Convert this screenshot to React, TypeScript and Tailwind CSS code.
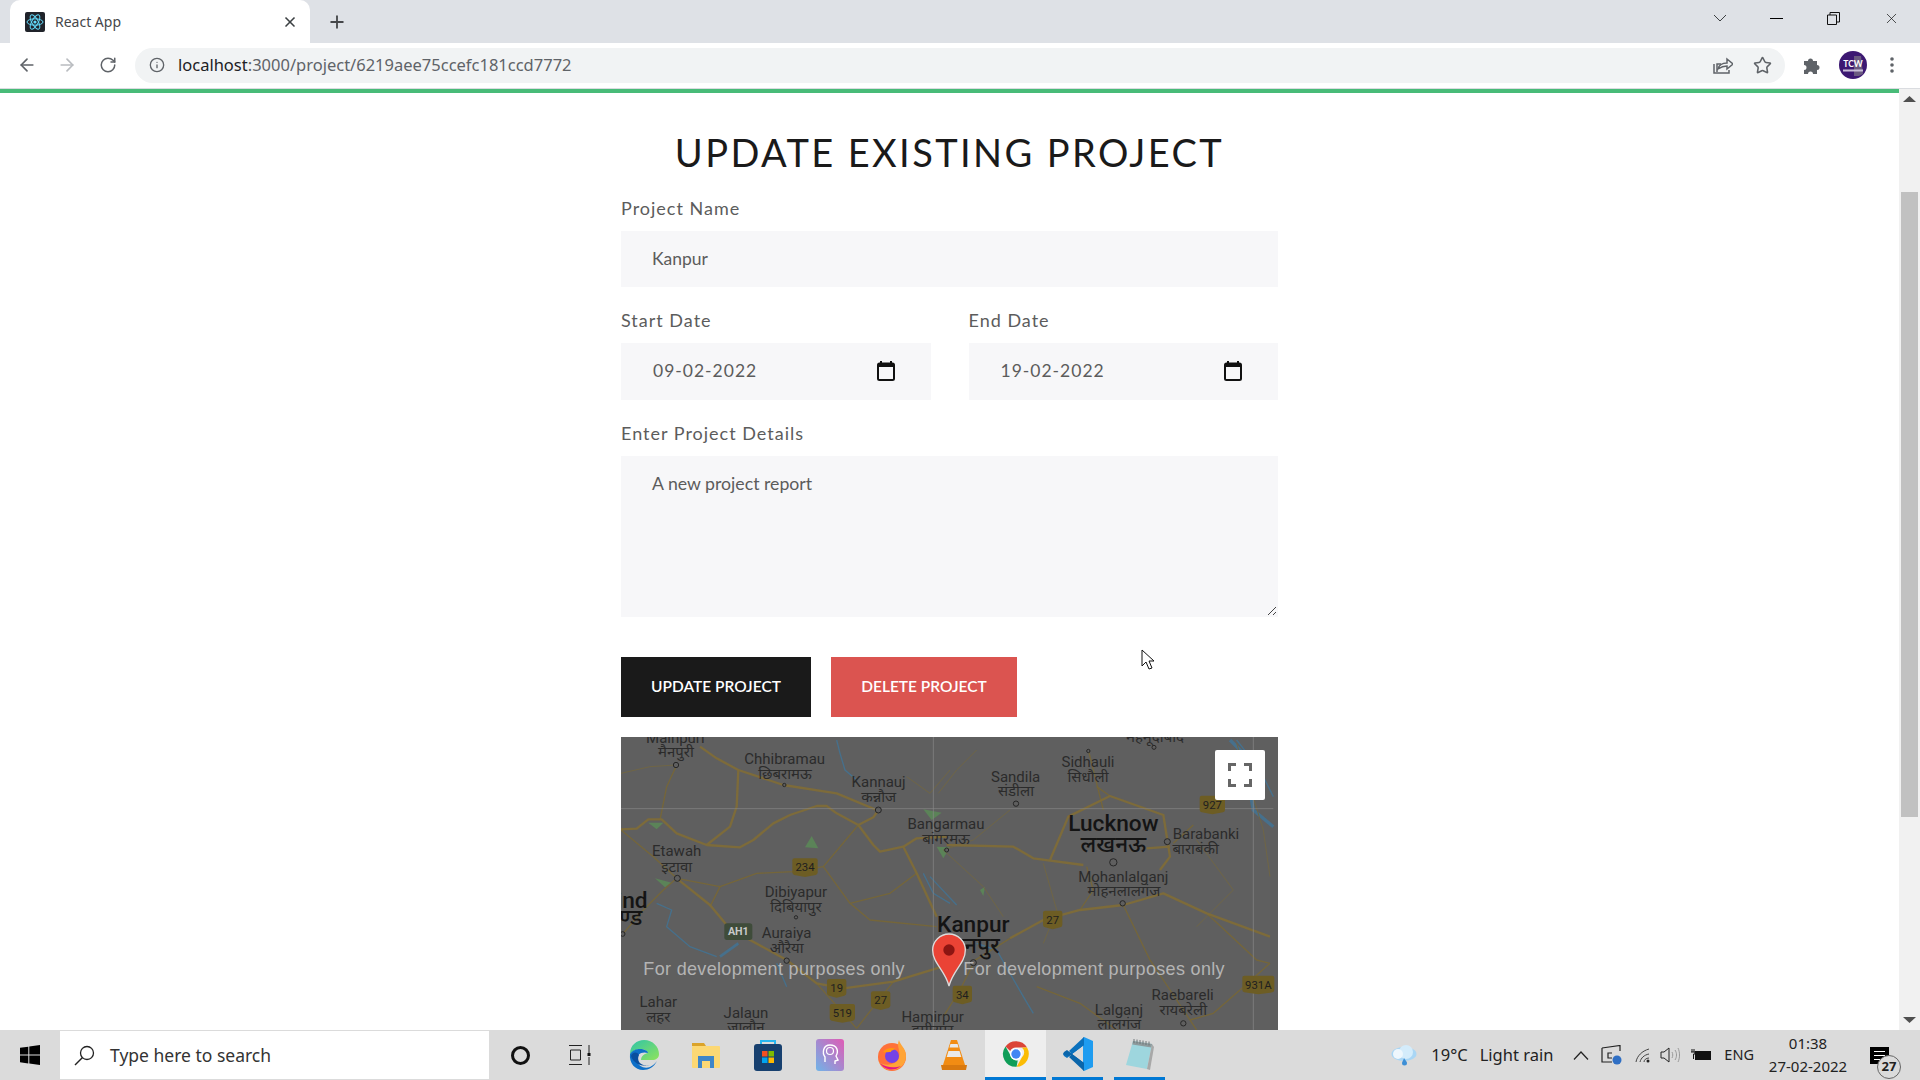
import { ArrowLeft, ArrowRight, Info, Plus, RotateCw, Star, X } from "lucide-react";

const highways = [
  "M33 298 L80 296 L115 268 L155 268 L200 310 L290 345 L390 352 L430 330 L490 280 L540 255 L620 228 L650 228 L680 250 L745 285 L790 345 L810 365 L880 350 L920 325 L1010 320",
  "M745 285 L790 262 L805 240",
  "M270 50 L320 85 L385 120 L520 165 L680 190 L800 240",
  "M385 120 L380 230 L360 290 L290 345",
  "M200 445 L300 525 L350 585 L420 630 L530 690 L620 760 L700 775 L850 755 L980 715 L1020 700",
  "M880 350 L920 430 L980 560",
  "M1010 345 L1210 350 L1270 385 L1420 405",
  "M1200 625 L1300 570 L1410 540 L1540 525 L1660 490 L1790 550 L1980 620",
  "M1320 390 L1375 260 L1500 198 L1660 255 L1680 380 L1650 420",
  "M1680 350 L1610 355",
];

const roads = [
  "M200 105 L170 170 L150 270",
  "M33 300 L130 380 L200 445",
  "M200 445 L330 470 L440 430 L550 425 L640 410 L745 285",
  "M330 470 L300 530",
  "M40 610 L100 540 L160 480 L200 445",
  "M620 760 L740 895",
  "M850 755 L740 895",
  "M640 410 L720 520 L780 570 L980 590",
  "M720 520 L840 490 L920 430",
  "M1435 60 L1480 240",
  "M1460 170 L1500 198",
  "M1410 540 L1450 480 L1430 410",
  "M1080 700 L1200 625",
  "M1090 700 L1050 780 L1000 860",
  "M1540 525 L1620 690 L1680 780 L1760 900",
  "M1790 550 L1940 690 L1980 700",
  "M1750 285 L1690 340",
  "M1980 700 L1890 780 L1810 850 L1740 870",
  "M1280 770 L1410 820 L1520 900",
];

const thinRoads = [
  "M33 130 L120 110 L198 105",
  "M890 140 L960 190 L1020 120",
  "M985 190 L1040 120 L1100 60",
  "M1200 240 L1090 330 L1000 360",
  "M1000 360 L1120 470 L1180 560",
  "M1300 400 L1340 540 L1300 640",
  "M1760 330 L1870 480 L1760 590",
  "M1880 40 L1960 300 L1980 440",
];

const rivers = [
  "M140 520 L185 540 L170 590 L240 650 L320 680",
  "M500 700 L530 770",
  "M680 30 L690 70 L705 120 L740 150",
  "M940 430 L970 490 L1020 520",
  "M1100 640 L1160 660 L1240 800 L1270 850",
  "M960 440 L1040 525",
  "M1880 30 L1950 120 L1990 200",
];

const parks = [
  "585,352 605,318 625,355",
  "135,445 185,458 165,472",
  "115,278 160,278 140,298",
  "940,238 995,248 965,270",
  "980,350 1020,352 1000,385",
  "1110,480 1125,470 1120,498",
];

const smallLabels: [string, number, number][] = [
  ["Mainpuri", 196, 38],
  ["मैनपुरी", 198, 82],
  ["Chhibramau", 524, 102],
  ["छिबरामऊ", 525, 148],
  ["Kannauj", 806, 172],
  ["कन्नौज", 806, 215],
  ["Etawah", 200, 378],
  ["इटावा", 200, 425],
  ["Dibiyapur", 558, 500],
  ["दिबियापुर", 558, 545],
  ["Auraiya", 530, 625],
  ["औरैया", 530, 668],
  ["Lahar", 145, 830],
  ["लहर", 145, 875],
  ["Jalaun", 408, 865],
  ["जालौन", 408, 905],
  ["Hamirpur", 968, 877],
  ["हमीरपुर", 968, 915],
  ["Bangarmau", 1008, 298],
  ["बांगरमऊ", 1008, 342],
  ["Sidhauli", 1434, 112],
  ["सिधौली", 1434, 156],
  ["Sandila", 1217, 155],
  ["संडीला", 1218, 198],
  ["महमूदाबाद", 1635, 35],
  ["Barabanki", 1788, 328],
  ["बाराबंकी", 1757, 372],
  ["Mohanlalganj", 1540, 455],
  ["मोहनलालगंज", 1542, 498],
  ["Raebareli", 1718, 810],
  ["रायबरेली", 1720, 855],
  ["Lalganj", 1527, 855],
  ["लालगंज", 1528, 898],
];

const bigLabels: [string, number, number][] = [
  ["Lucknow", 1510, 302],
  ["लखनऊ", 1510, 367],
  ["Kanpur", 1090, 605],
  ["कानपुर", 1080, 670],
  ["ind", 66, 533],
  ["ण्ड", 62, 585],
];

const shields: [string, number, number, number][] = [
  ["234", 585, 413, 76],
  ["19", 680, 775, 58],
  ["27", 812, 812, 58],
  ["519", 697, 850, 76],
  ["927", 1807, 225, 76],
  ["27", 1328, 570, 58],
  ["34", 1057, 795, 58],
  ["931A", 1945, 765, 96],
];

const towns: [number, number, number][] = [
  [198, 105, 8],
  [523, 165, 5],
  [805, 240, 9],
  [202, 445, 9],
  [558, 562, 5],
  [530, 692, 8],
  [38, 612, 7],
  [1218, 221, 8],
  [1435, 63, 5],
  [1632, 52, 6],
  [1672, 335, 9],
  [1510, 397, 11],
  [1538, 520, 8],
  [1010, 360, 6],
  [1090, 698, 9],
  [1720, 880, 8],
];

const MapDrawing = () => (
  <svg viewBox="0 0 657 293" className="block h-full w-full font-['Roboto','Noto_Sans',sans-serif]">
    <rect width="657" height="293" fill="#5f5f5f" />
    <g transform="translate(-11 -7) scale(0.33333)">
      {parks.map((p) => (
        <polygon key={p} points={p} fill="#5b8358" />
      ))}
      {rivers.map((d) => (
        <path key={d} d={d} fill="none" stroke="#46708c" strokeWidth="4" />
      ))}
      <path d="M330 680 L385 640" fill="none" stroke="#46708c" strokeWidth="8" />
      <path d="M1860 30 L1900 70 L1930 240 L1990 290" fill="none" stroke="#46708c" strokeWidth="10" />
      {thinRoads.map((d) => (
        <path key={d} d={d} fill="none" stroke="#6f6545" strokeWidth="3" />
      ))}
      {roads.map((d) => (
        <path key={d} d={d} fill="none" stroke="#75663a" strokeWidth="4" strokeLinejoin="round" />
      ))}
      {highways.map((d) => (
        <path key={d} d={d} fill="none" stroke="#7d6b3a" strokeWidth="7" strokeLinejoin="round" />
      ))}
      <path d="M33 236 H1990 M970 21 V900 M1930 21 V900" fill="none" stroke="#8a8a8a" strokeWidth="2" />
      {towns.map(([x, y, r]) => (
        <circle key={`${x}-${y}`} cx={x} cy={y} r={r} fill="#5f5f5f" stroke="#262626" strokeWidth="3" />
      ))}
      {smallLabels.map(([t, x, y]) => (
        <text key={t} x={x} y={y} textAnchor="middle" fontSize="45" fill="#2b2b2b">
          {t}
        </text>
      ))}
      {bigLabels.map(([t, x, y]) => (
        <text key={t} x={x} y={y} textAnchor="middle" fontSize="68" fontWeight="500" fill="#141414">
          {t}
        </text>
      ))}
      {shields.map(([t, x, y, w]) => (
        <g key={`${t}-${x}`}>
          <path
            d={`M${x - w / 2} ${y - 22} q0 -6 6 -6 H${x + w / 2 - 6} q6 0 6 6 V${y + 14} q0 6 -6 8 L${x} ${y + 28} L${x - w / 2 + 6} ${y + 22} q-6 -2 -6 -8 Z`}
            fill="#6d5d24"
          />
          <text x={x} y={y + 11} textAnchor="middle" fontSize="34" fill="#1f1f1f">
            {t}
          </text>
        </g>
      ))}
      <rect x="343" y="580" width="84" height="50" rx="8" fill="#3f4c3a" />
      <text x="385" y="616" textAnchor="middle" fontSize="32" fontWeight="700" fill="#c9c9c9">
        AH1
      </text>
      <text x="100" y="735" fontSize="54" letterSpacing="1" fill="#b4b4b4" className="font-['Liberation_Sans',sans-serif]">
        For development purposes only
      </text>
      <text x="1060" y="735" fontSize="54" letterSpacing="1" fill="#b4b4b4" className="font-['Liberation_Sans',sans-serif]">
        For development purposes only
      </text>
      <path
        d="M1017 612 C990 612 968 634 968 660 C968 700 1005 720 1017 768 C1029 720 1066 700 1066 660 C1066 634 1044 612 1017 612 Z"
        fill="#ea4335"
        stroke="#dcdcdc"
        strokeWidth="4"
      />
      <circle cx="1017" cy="660" r="17" fill="#8c1512" />
    </g>
  </svg>
);

const CalendarIcon = () => (
  <svg width="18" height="20" viewBox="0 0 18 20" className="-mt-[2px] shrink-0">
    <path d="M4 0v3M14 0v3" stroke="#111" strokeWidth="2" />
    <rect x="1" y="2.5" width="16" height="16.5" rx="1.5" fill="none" stroke="#111" strokeWidth="2" />
    <rect x="1" y="2.5" width="16" height="3.5" fill="#111" />
  </svg>
);

const TaskIcons = {
  edge: (
    <svg width="32" height="32" viewBox="0 0 32 32">
      <defs>
        <linearGradient id="edgeA" x1="0" y1="0" x2="1" y2="1">
          <stop offset="0" stopColor="#2ec4a8" />
          <stop offset="1" stopColor="#8fe35c" />
        </linearGradient>
      </defs>
      <path d="M2 15C2 6 9 1 16 1c9 0 15 7 15 14 0 4-3 6-7 6H13c0-6 7-7 7-7C18 9 8 8 2 15Z" fill="url(#edgeA)" />
      <path d="M2 15c5-8 18-5 18-1-6-2-12 1-11 8 1 5 7 8 13 6 2-1 5-3 7-6-3 6-8 9-14 9C7 31 1 24 2 15Z" fill="#0e70c8" />
      <path d="M11 16c-3 6 2 12 11 10-6 2-16 0-19-9 1-4 6-5 8-1Z" fill="#0a4f9e" />
    </svg>
  ),
  files: (
    <svg width="28" height="26" viewBox="0 0 28 26">
      <path d="M0 1h12l2 3H0Z" fill="#dba32a" />
      <rect y="4" width="28" height="22" rx="1" fill="#fcd874" />
      <path d="M6 14h16v12h-4v-7h-8v7H6Z" fill="#3f86c8" />
    </svg>
  ),
  store: (
    <svg width="28" height="32" viewBox="0 0 28 32">
      <path d="M7 8V2h14v6" fill="none" stroke="#28b6f0" strokeWidth="2" />
      <rect y="5" width="28" height="27" rx="3" fill="#17406f" />
      <rect x="8" y="12" width="5.5" height="5.5" fill="#f25022" />
      <rect x="14.5" y="12" width="5.5" height="5.5" fill="#7fba00" />
      <rect x="8" y="18.5" width="5.5" height="5.5" fill="#00a4ef" />
      <rect x="14.5" y="18.5" width="5.5" height="5.5" fill="#ffb900" />
    </svg>
  ),
  msi: (
    <svg width="28" height="32" viewBox="0 0 28 32">
      <defs>
        <linearGradient id="msiA" x1="0" y1="1" x2="1" y2="0">
          <stop offset="0" stopColor="#6fb4e8" />
          <stop offset="1" stopColor="#e05bb5" />
        </linearGradient>
      </defs>
      <rect width="28" height="32" rx="3" fill="url(#msiA)" />
      <path d="M9 23v-5c-3-4-2-12 5-12s9 6 6 11l2 4-3 1v3" fill="none" stroke="#fff" strokeWidth="1.4" />
      <circle cx="14" cy="12" r="3.5" fill="none" stroke="#fff" strokeWidth="1.2" />
    </svg>
  ),
  firefox: (
    <svg width="30" height="32" viewBox="0 0 30 32">
      <circle cx="15" cy="18" r="14" fill="#ff7139" />
      <path d="M22 1c1 5 7 8 7 16 0 8-6 14-14 14C9 31 4 28 2 23c6 5 18 3 20-5C24 11 19 8 22 1Z" fill="#ffa436" />
      <path d="M3 24c4 7 14 9 21 3-6 2-15 2-21-3Z" fill="#e31587" />
      <circle cx="15" cy="17" r="7" fill="#7542e5" />
      <path d="M6 13c3-4 9-5 13-3-2 1-5 1-5 3-4 0-6 1-8 0Z" fill="#ff980e" />
    </svg>
  ),
  vlc: (
    <svg width="26" height="32" viewBox="0 0 26 32">
      <path d="M10 1h6l8 25H2Z" fill="#f28c13" />
      <path d="M7.5 12h11l1.8 6H5.700Z" fill="#e9e9e9" />
      <path d="M9.500 5h7l1 3.500h-9Z" fill="#e9e9e9" />
      <path d="M0 26h26l-1 5H1Z" fill="#d9790f" />
    </svg>
  ),
  chrome: (
    <svg width="28" height="28" viewBox="0 0 48 48">
      <path d="M24 2a22 22 0 0 1 19 11H24a11 11 0 0 0-10 6L6 11A22 22 0 0 1 24 2Z" fill="#db4437" />
      <path d="M43 13a22 22 0 0 1-18 33l9-16a11 11 0 0 0 0-17Z" fill="#fbbc05" />
      <path d="M6 11l9 16a11 11 0 0 0 12 8l-2 11A22 22 0 0 1 6 11Z" fill="#0f9d58" />
      <circle cx="24" cy="24" r="10.500" fill="#fff" />
      <circle cx="24" cy="24" r="8" fill="#4285f4" />
    </svg>
  ),
  vscode: (
    <svg width="30" height="34" viewBox="0 0 30 34">
      <path d="M21 0l9 4v26l-9 4-1-5V5Z" fill="#1f9cf0" />
      <path d="M21 0v8L9 17 4 21l-3-2-1-2 5-2 4 1Z" fill="#0b71bd" />
      <path d="M21 34v-8L9 17l-5-4-3 2-1 2 5 2 4-1Z" fill="#0a65aa" />
      <path d="M21 0L6 14l3 3 12-9Z" fill="#0b71bd" />
      <path d="M21 34L6 20l3-3 12 9Z" fill="#0a65aa" />
    </svg>
  ),
  notepad: (
    <svg width="30" height="32" viewBox="0 0 30 32">
      <path d="M8 3l19 3-5 25-21-4Z" fill="#9ed6de" />
      <path d="M27 6l2 3-4 23-3-1Z" fill="#a8a8a8" />
      <path d="M8 3l19 3-.7 3.500-19-3Z" fill="#8e9a9c" />
      <path d="M9 1v4M12 1.500v4M15 2v4M18 2.500v4M21 3v4M24 3.500v4" stroke="#6f7678" strokeWidth="1" />
    </svg>
  ),
};

const App = () => {
  return (
    <div className="relative flex h-screen w-full flex-col overflow-hidden bg-white font-['Lato',sans-serif]">
      {/* tab strip */}
      <div className="flex h-[43px] shrink-0 items-end bg-[#dee1e6]">
        <div className="ml-[10px] flex h-[43px] w-[300px] items-center rounded-t-[10px] bg-white pl-[15px] pr-[12px]">
          <svg width="20" height="20" viewBox="0 0 20 20" className="shrink-0">
            <rect width="20" height="20" rx="2" fill="#20232a" />
            <g fill="none" stroke="#61dafb" strokeWidth="1">
              <ellipse cx="10" cy="10" rx="8" ry="3.200" />
              <ellipse cx="10" cy="10" rx="8" ry="3.200" transform="rotate(60 10 10)" />
              <ellipse cx="10" cy="10" rx="8" ry="3.200" transform="rotate(120 10 10)" />
            </g>
            <circle cx="10" cy="10" r="1.600" fill="#61dafb" />
          </svg>
          <span className="ml-[10px] font-['Noto_Sans',sans-serif] text-[14px] text-[#45474a]">React App</span>
          <X size={16} strokeWidth={2.5} className="ml-auto text-[#3c4043]" />
        </div>
        <div className="flex h-[43px] w-[54px] items-center justify-center">
          <Plus size={20} strokeWidth={2.2} className="text-[#45474a]" />
        </div>
        <div className="ml-auto flex h-[36px] items-center self-start">
          <svg width="14" height="8" viewBox="0 0 14 8" className="mr-[43px]">
            <path d="M1 1l6 6 6-6" fill="none" stroke="#3c4043" strokeWidth="1" />
          </svg>
          <div className="mr-[44px] h-px w-[13px] bg-black" />
          <svg width="13" height="13" viewBox="0 0 13 13" className="mr-[43px]">
            <path d="M.5 3h9v9.500h-9Z M3 3V.5h9.500V10H9.500" fill="none" stroke="#111" strokeWidth="1" />
          </svg>
          <X size={17} strokeWidth={1} className="mr-[20px] text-[#111]" />
        </div>
      </div>

      {/* toolbar */}
      <div className="flex h-[46px] shrink-0 items-center border-b border-[#dadce0] bg-white pb-px">
        <ArrowLeft size={20} strokeWidth={2} className="ml-[17px] text-[#5f6368]" />
        <ArrowRight size={20} strokeWidth={2} className="ml-[20px] text-[#b9bcc0]" />
        <RotateCw size={18} strokeWidth={2} className="ml-[22px] text-[#5f6368]" />
        <div className="ml-[18px] flex h-[35px] w-[1650px] items-center rounded-full bg-[#f1f3f4] pl-[14px] pr-[13px]">
          <Info size={16} strokeWidth={2} className="text-[#5f6368]" />
          <span className="ml-[13px] font-['Noto_Sans',sans-serif] text-[16.500px] text-[#5f6368]">
            <span className="text-[#202124]">localhost</span>:3000/project/6219aee75ccefc181ccd7772
          </span>
          <svg width="20" height="18" viewBox="0 0 20 18" className="ml-auto">
            <path d="M4 16V8h4M1 8v9h15v-3" fill="none" stroke="#5f6368" strokeWidth="1.500" />
            <path d="M5 13c1-4 5-6 9-6V3l6 5-6 5V10c-3 0-6 1-9 3Z" fill="none" stroke="#5f6368" strokeWidth="1.500" />
          </svg>
          <Star size={19} strokeWidth={2} className="ml-[20px] text-[#5f6368]" />
        </div>
        <svg width="20" height="20" viewBox="0 0 20 20" className="ml-[17px]">
          <path d="M2 6h4a2.500 2.500 0 1 1 5 0h4v4a2.500 2.500 0 1 1 0 5v4h-4a2.500 2.500 0 1 0-5 0H2v-4a2.500 2.500 0 1 0 0-5Z" fill="#5f6368" />
        </svg>
        <svg width="28" height="28" viewBox="0 0 28 28" className="ml-[17px]">
          <circle cx="14" cy="14" r="14" fill="#3c1872" />
          <path d="M15 5h7l2 18-4 2h-5Z" fill="#6a5a80" />
          <text x="14" y="15.500" textAnchor="middle" fontSize="8.500" fontWeight="700" fill="#fff">
            TCW
          </text>
          <rect x="4" y="18.500" width="20" height="2" fill="#c9bfd8" />
        </svg>
        <svg width="4" height="16" viewBox="0 0 4 16" className="ml-[23px]">
          <circle cx="2" cy="2" r="1.800" fill="#5f6368" />
          <circle cx="2" cy="8" r="1.800" fill="#5f6368" />
          <circle cx="2" cy="14" r="1.800" fill="#5f6368" />
        </svg>
      </div>

      <div className="flex min-h-0 flex-1">
        {/* page */}
        <div className="flex min-w-0 flex-1 flex-col">
          <div className="h-[4px] shrink-0 bg-[#48bb78]" />
          <div className="mx-auto w-[657px]">
            <h1 className="mt-[33px] text-center text-[38px] leading-[52px] tracking-[2.400px] text-[#1a1a1a]">
              UPDATE EXISTING PROJECT
            </h1>
            <label className="mt-[18px] block text-[18px] leading-[24px] tracking-[1px] text-[#5c5c5c]">Project Name</label>
            <input
              readOnly
              defaultValue="Kanpur"
              className="mt-[11px] block h-[56px] w-full bg-[#f7f7f9] px-[31px] pb-[2px] text-[17.500px] text-[#5c5c5c] outline-none"
            />
            <div className="mt-[21px] grid grid-cols-2 gap-[38px]">
              <div>
                <label className="block text-[18px] leading-[24px] tracking-[1px] text-[#5c5c5c]">Start Date</label>
                <div className="mt-[11px] flex h-[57px] items-center justify-between bg-[#f7f7f9] pl-[32px] pr-[36px] text-[17.500px] tracking-[1px] text-[#5c5c5c]">
                  09-02-2022
                  <CalendarIcon />
                </div>
              </div>
              <div>
                <label className="block text-[18px] leading-[24px] tracking-[1px] text-[#5c5c5c]">End Date</label>
                <div className="mt-[11px] flex h-[57px] items-center justify-between bg-[#f7f7f9] pl-[32px] pr-[36px] text-[17.500px] tracking-[1px] text-[#5c5c5c]">
                  19-02-2022
                  <CalendarIcon />
                </div>
              </div>
            </div>
            <label className="mt-[21px] block text-[18px] leading-[24px] tracking-[1px] text-[#5c5c5c]">Enter Project Details</label>
            <div className="relative mt-[11px]">
              <textarea
                readOnly
                defaultValue="A new project report"
                className="block h-[161px] w-full resize-none bg-[#f7f7f9] px-[31px] py-[16px] text-[17.700px] leading-[24px] text-[#5c5c5c] outline-none"
              />
              <svg width="10" height="10" viewBox="0 0 10 10" className="absolute bottom-[1px] right-[1px]">
                <path d="M1 9L9 1M6 9L9 6" stroke="#444" strokeWidth="1" />
              </svg>
            </div>
            <div className="mt-[40px] flex gap-[20px]">
              <button className="h-[60px] w-[190px] bg-[#1a1a1a] text-[15.500px] font-semibold text-white">UPDATE PROJECT</button>
              <button className="h-[60px] w-[186px] bg-[#db5450] text-[15.500px] font-semibold text-white">DELETE PROJECT</button>
            </div>
            <div className="relative mt-[20px] h-[293px] overflow-hidden">
              <MapDrawing />
              <div className="absolute right-[13px] top-[13px] flex h-[50px] w-[50px] items-center justify-center rounded-[2px] bg-white">
                <svg width="24" height="24" viewBox="0 0 24 24">
                  <path d="M1.500 8V1.500H8M16 1.500h6.500V8M22.500 16v6.500H16M8 22.500H1.500V16" fill="none" stroke="#666" strokeWidth="3" />
                </svg>
              </div>
            </div>
          </div>
        </div>

        {/* scrollbar */}
        <div className="flex w-[21px] shrink-0 flex-col items-center bg-[#f1f1f1]">
          <svg width="15" height="8" viewBox="0 0 15 8" className="mt-[6px]">
            <path d="M7.500 1l6.500 6H1Z" fill="#505050" />
          </svg>
          <div className="mt-[89px] h-[625px] w-[17px] bg-[#c1c1c1]" />
          <svg width="15" height="8" viewBox="0 0 15 8" className="mb-[6px] mt-auto">
            <path d="M7.500 7L14 1H1Z" fill="#505050" />
          </svg>
        </div>
      </div>

      {/* taskbar */}
      <div className="flex h-[50px] shrink-0 items-center bg-[#dbdbdb] font-['Noto_Sans',sans-serif] text-[#222]">
        <div className="flex w-[60px] justify-center">
          <svg width="20" height="20" viewBox="0 0 20 20">
            <path d="M0 2.800l8.300-1.100v7.900H0ZM9.300 1.500L20 0v9.600H9.300ZM0 10.500h8.300v7.900L0 17.200ZM9.300 10.500H20V20L9.300 18.500Z" fill="#000" />
          </svg>
        </div>
        <div className="flex h-[48px] w-[429px] items-center bg-white pl-[14px]">
          <svg width="21" height="21" viewBox="0 0 21 21">
            <circle cx="13" cy="8" r="6.500" fill="none" stroke="#222" strokeWidth="1.300" />
            <path d="M8.500 12.500L1 20" stroke="#222" strokeWidth="1.500" />
          </svg>
          <span className="ml-[15px] text-[17.500px] text-[#333]">Type here to search</span>
        </div>
        <div className="flex w-[62px] justify-center">
          <div className="h-[19px] w-[19px] rounded-full border-[3px] border-[#111]" />
        </div>
        <div className="flex w-[62px] justify-center pr-[4px]">
          <svg width="22" height="20" viewBox="0 0 22 20">
            <path d="M0 .5h13M0 19.500h13M1.500 5h10v10h-10ZM20 0v8M20 12v8" fill="none" stroke="#222" strokeWidth="1" />
            <rect x="18.500" y="8" width="3" height="3" fill="#111" />
          </svg>
        </div>
        <div className="flex h-full w-[62px] items-center justify-center">{TaskIcons.edge}</div>
        <div className="flex h-full w-[62px] items-center justify-center">{TaskIcons.files}</div>
        <div className="flex h-full w-[62px] items-center justify-center">{TaskIcons.store}</div>
        <div className="flex h-full w-[62px] items-center justify-center">{TaskIcons.msi}</div>
        <div className="flex h-full w-[62px] items-center justify-center">{TaskIcons.firefox}</div>
        <div className="flex h-full w-[62px] items-center justify-center">{TaskIcons.vlc}</div>
        <div className="flex h-full w-[61px] items-center justify-center border-b-[3px] border-[#0078d4] bg-[#eeeeee]">
          {TaskIcons.chrome}
        </div>
        <div className="ml-[6px] flex h-full w-[51px] items-center justify-center border-b-[3px] border-[#0078d4]">
          {TaskIcons.vscode}
        </div>
        <div className="ml-[11px] flex h-full w-[51px] items-center justify-center border-b-[3px] border-[#0078d4]">
          {TaskIcons.notepad}
        </div>

        <div className="ml-auto flex h-full items-center">
          <svg width="26" height="22" viewBox="0 0 26 22" className="mr-[14px]">
            <ellipse cx="13" cy="10" rx="12.500" ry="7" fill="#a9d6f5" />
            <circle cx="15" cy="8" r="7" fill="#d4ecfb" />
            <circle cx="7" cy="10" r="5" fill="#eef7fd" />
            <path d="M13 14c2 3 3 4 3 5a2.500 2.500 0 0 1-5 0c0-1 1-2 2-5Z" fill="#3d8fd6" />
          </svg>
          <span className="text-[16.500px]">19°C</span>
          <span className="ml-[12px] text-[16.500px]">Light rain</span>
          <svg width="16" height="9" viewBox="0 0 16 9" className="ml-[20px]">
            <path d="M1 8.500L8 1l7 7.500" fill="none" stroke="#222" strokeWidth="1.200" />
          </svg>
          <svg width="21" height="20" viewBox="0 0 21 20" className="ml-[12px]">
            <path d="M1 3l18-2.500V6M1 3v14h10" fill="none" stroke="#222" strokeWidth="1.200" />
            <path d="M11 8H7v5h4" fill="none" stroke="#222" strokeWidth="1.200" />
            <circle cx="16" cy="15" r="4.500" fill="#2f6fc4" />
          </svg>
          <svg width="16" height="15" viewBox="0 0 16 15" className="ml-[13px]">
            <path d="M1 14C2 8 7 3 14 1M5 14c1-4 4-7 9-8M9 14c0-2 2-4 5-4" fill="none" stroke="#444" strokeWidth="1" />
            <circle cx="13" cy="13" r="1.500" fill="#222" />
          </svg>
          <svg width="20" height="16" viewBox="0 0 20 16" className="ml-[9px]">
            <path d="M1 5h3l5-4v14l-5-4H1Z" fill="none" stroke="#222" strokeWidth="1" />
            <path d="M12 5c1 2 1 4 0 6M15 3c2 3 2 7 0 10M18 1c2 4 2 10 0 14" fill="none" stroke="#999" strokeWidth="1" />
          </svg>
          <svg width="20" height="12" viewBox="0 0 20 12" className="ml-[11px]">
            <rect x="4.500" y="2.500" width="15" height="8" fill="#111" stroke="#111" />
            <path d="M1 0v3M3 0v3M0 3h4v2H2.500v5" fill="none" stroke="#111" strokeWidth="1" />
          </svg>
          <span className="ml-[13px] text-[14.500px]">ENG</span>
          <div className="ml-[14px] flex w-[80px] flex-col items-center text-[15px] leading-[23px]">
            <span>01:38</span>
            <span>27-02-2022</span>
          </div>
          <div className="relative ml-[22px] mr-[31px] h-[17px] w-[19px] bg-black">
            <div className="mx-[4px] mt-[4px] h-px bg-white" />
            <div className="mx-[4px] mt-[3px] h-px bg-white" />
            <div className="mx-[4px] mt-[3px] h-px bg-white" />
            <div className="absolute left-[7px] top-[8px] flex h-[24px] w-[24px] items-center justify-center rounded-full border border-[#666] bg-[#dbdbdb] text-[13px] font-bold text-[#222]">
              27
            </div>
          </div>
        </div>
      </div>

      {/* mouse pointer */}
      <svg width="14" height="21" viewBox="0 0 14 21" className="absolute left-[1141px] top-[649px]">
        <path d="M1 1v16l4-4 3 7 3-1-3-7h5Z" fill="#fff" stroke="#111" strokeWidth="1" />
      </svg>
    </div>
  );
};

export default App;
